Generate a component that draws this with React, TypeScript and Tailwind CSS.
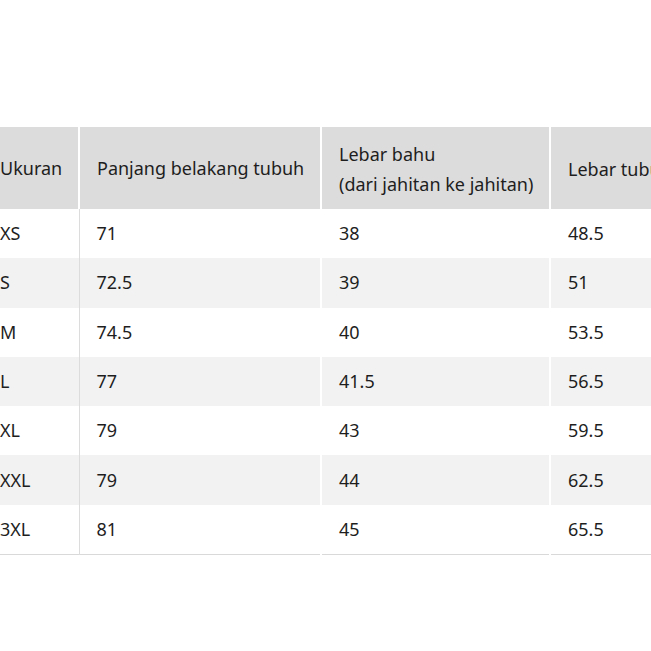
const rows: [string, string, string, string][] = [
  ['XS', '71', '38', '48.5'],
  ['S', '72.5', '39', '51'],
  ['M', '74.5', '40', '53.5'],
  ['L', '77', '41.5', '56.5'],
  ['XL', '79', '43', '59.5'],
  ['XXL', '79', '44', '62.5'],
  ['3XL', '81', '45', '65.5'],
];

export default function App() {
  return (
    <div className="w-[651px] h-[651px] overflow-hidden bg-white pt-[127px] font-['Noto_Sans',sans-serif] text-[18px] text-[#1e1e1e]">
      <table className="ml-[-17px] w-[800px] table-fixed border-collapse border-b border-[#d9d9d9]">
        <colgroup>
          <col className="w-[96px]" />
          <col className="w-[242px]" />
          <col className="w-[229px]" />
          <col className="w-[233px]" />
        </colgroup>
        <thead>
          <tr className="h-[82px] bg-[#dcdcdc] text-left">
            <th className="pl-[17px] font-normal border-r-2 border-white">Ukuran</th>
            <th className="pl-[17px] font-normal border-r-2 border-white">Panjang belakang tubuh</th>
            <th className="pl-[17px] pt-[2px] font-normal leading-[30px] border-r-2 border-white">
              Lebar bahu
              <br />
              (dari jahitan ke jahitan)
            </th>
            <th className="pl-[17px] pt-[2px] font-normal">Lebar tubuh</th>
          </tr>
        </thead>
        <tbody>
          {rows.map((r, i) => (
            <tr key={r[0]} className={i % 2 === 1 ? 'h-[49.3px] bg-[#f2f2f2]' : 'h-[49.3px] bg-white'}>
              <td className="pl-[17px] border-r border-[#dcdcdc]">{r[0]}</td>
              <td className="pl-[17px] border-r-2 border-white">{r[1]}</td>
              <td className="pl-[17px] border-r-2 border-white">{r[2]}</td>
              <td className="pl-[17px]">{r[3]}</td>
            </tr>
          ))}
        </tbody>
      </table>
    </div>
  );
}
